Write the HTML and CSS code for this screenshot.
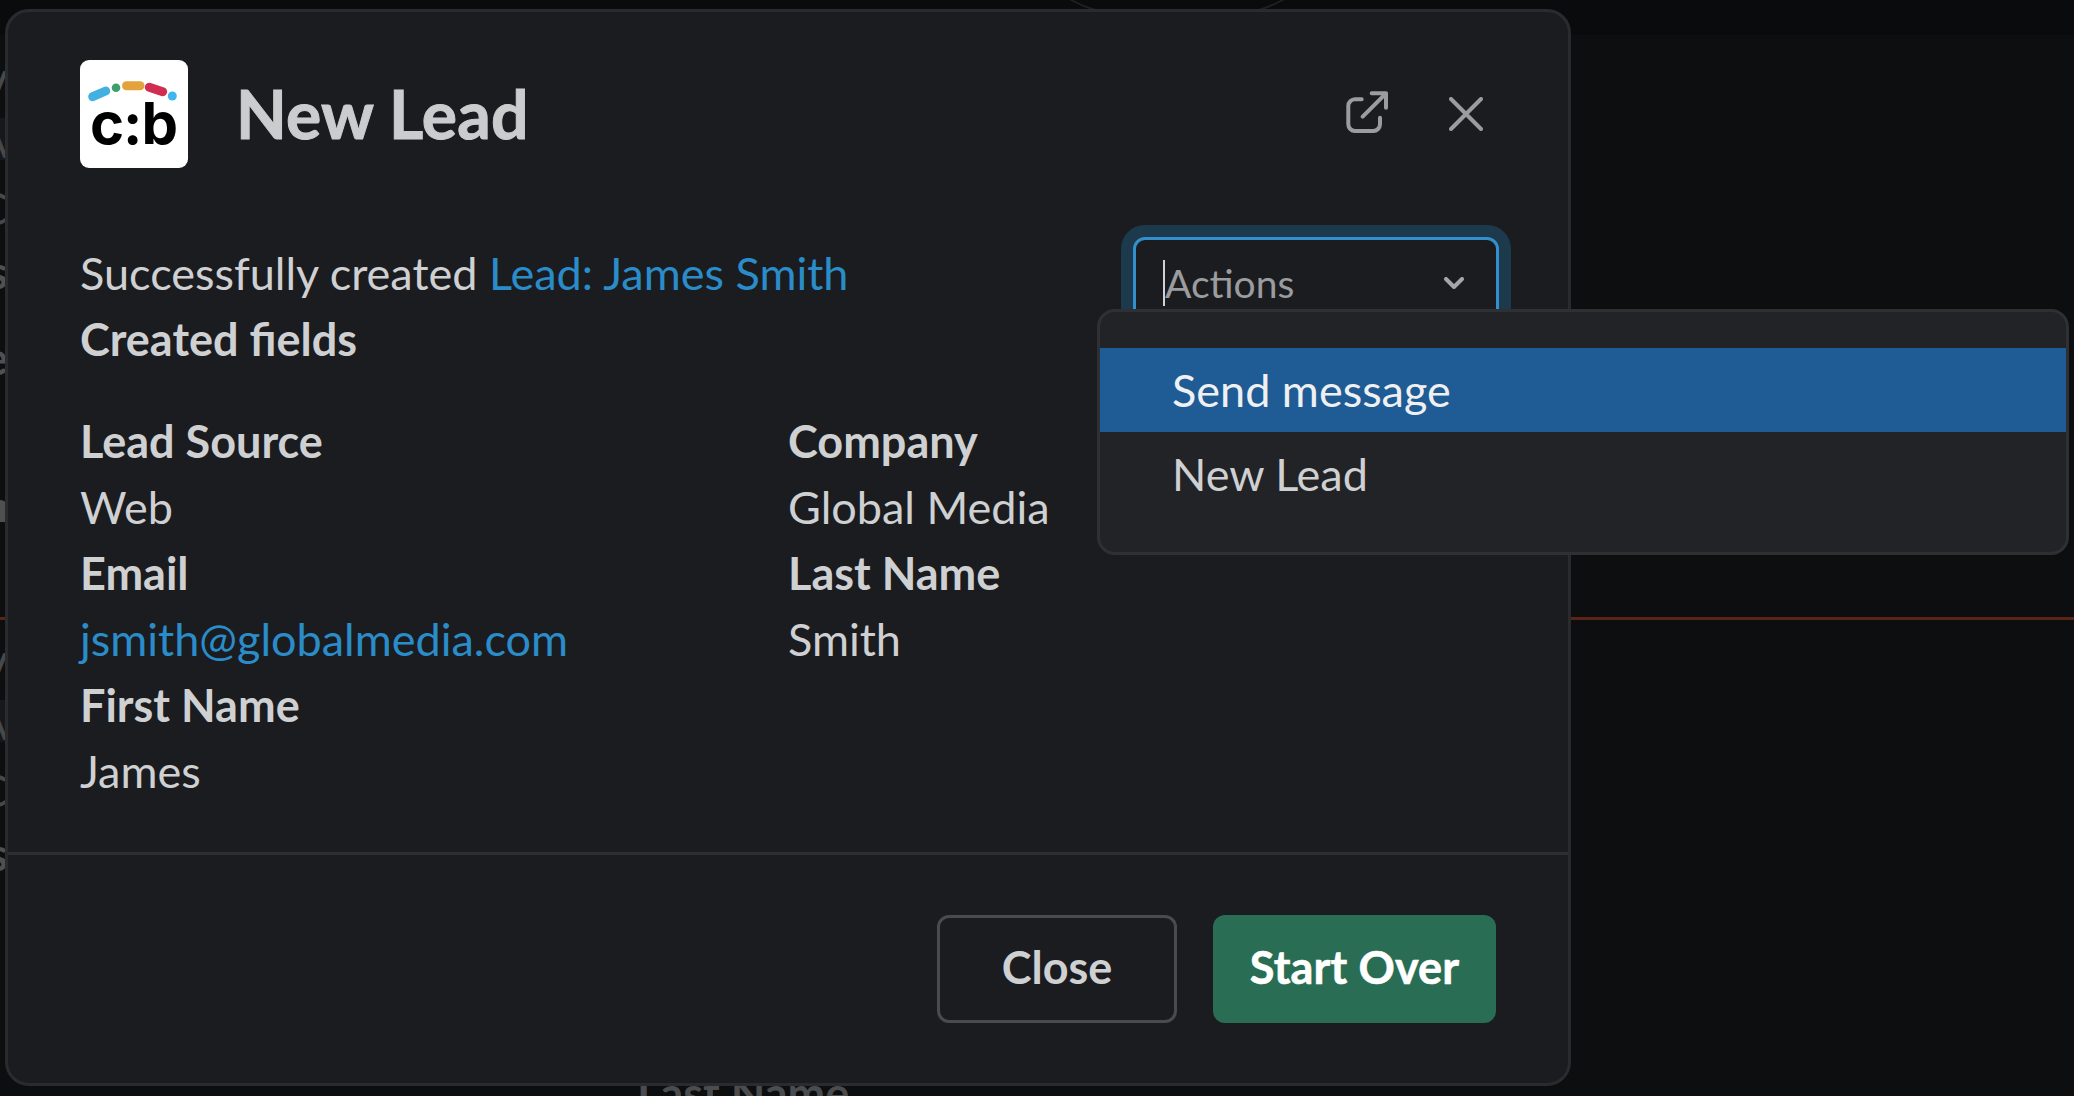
FILE: index.html
```html
<!DOCTYPE html>
<html lang="en">
<head>
<meta charset="utf-8">
<title>New Lead</title>
<link rel="stylesheet" href="styles.css">
</head>
<body>
<div class="backdrop">
  <div class="topbar"><span class="arc"></span></div>
  <div class="peek m29">V</div>
  <div class="peek band m9">A</div>
  <div class="peek m26">C</div>
  <div class="peek strong m19">s</div>
  <div class="peek strong m41">e</div>
  <div class="blob"></div>
  <div class="redline"></div>
  <div class="peek m26">V</div>
  <div class="peek band m9">A</div>
  <div class="peek m26">C</div>
  <div class="peek strong m19">s</div>
  <div class="ghost-label">Last Name</div>
</div>

<section class="modal">
  <header class="modal-head">
    <svg class="logo" viewBox="0 0 108 108" aria-label="c:b logo">
      <rect width="108" height="108" rx="9" fill="#fff"/>
      <path d="M12.7 36.7 25.7 31" stroke="#42b0e0" stroke-width="9" stroke-linecap="round"/>
      <circle cx="36" cy="27.7" r="4.3" fill="#3f9e6c"/>
      <path d="M46.500 25.700H60" stroke="#e2a33c" stroke-width="9" stroke-linecap="round"/>
      <path d="M69.300 27.300 82.700 31.700" stroke="#d12d50" stroke-width="9" stroke-linecap="round"/>
      <circle cx="92.300" cy="36" r="4.500" fill="#41b6ee"/>
      <text x="10" y="84" textLength="88" lengthAdjust="spacing" class="logo-text">c:b</text>
    </svg>
    <h1 class="title">New Lead</h1>
    <div class="head-icons">
      <svg class="icon-ext" viewBox="0 0 42 42" fill="none"><path d="M15.700 8.300H9a6.700 6.700 0 0 0-6.700 6.700V33.300a6.700 6.700 0 0 0 6.700 6.700H27.300a6.700 6.700 0 0 0 6.700-6.700V26.700M16.700 25.700 40 2.300M25.700 2.300H40V16.700"/></svg>
      <svg class="icon-x" viewBox="0 0 34 34" fill="none"><path d="M2 2 32 32M32 2 2 32"/></svg>
    </div>
  </header>

  <div class="modal-body">
    <div class="summary">
      <div class="status">
        <p>Successfully created <a class="link">Lead: James Smith</a></p>
        <p class="b">Created fields</p>
      </div>
      <div class="select">
        <span class="caret">Actions</span>
        <svg class="chev" viewBox="0 0 20 12" fill="none"><path d="M2 2 10 10 18 2"/></svg>
      </div>
    </div>
    <div class="fields">
      <dl class="field-col">
        <dt>Lead Source</dt><dd>Web</dd>
        <dt>Email</dt><dd><a class="link">jsmith@globalmedia.com</a></dd>
        <dt>First Name</dt><dd>James</dd>
      </dl>
      <dl class="field-col">
        <dt>Company</dt><dd>Global Media</dd>
        <dt>Last Name</dt><dd>Smith</dd>
      </dl>
    </div>
  </div>

  <footer class="modal-foot">
    <button class="btn btn-ghost">Close</button>
    <button class="btn btn-go">Start Over</button>
  </footer>

  <ul class="menu">
    <li class="menu-item active">Send message</li>
    <li class="menu-item">New Lead</li>
  </ul>
</section>
</body>
</html>
```
FILE: styles.css
```css
* { box-sizing: border-box; }
html, body { margin: 0; height: 1096px; overflow: hidden; }
body {
  position: relative;
  background: #0d0e10;
  font-family: "Lato", "Liberation Sans", sans-serif;
  font-size: 45px;
  line-height: 66px;
  color: #cfd0d2;
}

/* dimmed page behind the modal */
.backdrop { display: flex; flex-direction: column; height: 1096px; }
.topbar { flex: none; position: relative; height: 35px; background: #0a0b0d; overflow: hidden; }
.arc {
  position: absolute; left: 1050px; top: -72px; width: 254px; height: 94px;
  border: 2px solid #1f2123; border-radius: 50%;
}
.peek {
  flex: none; display: flex; justify-content: flex-end; width: 8px;
  height: 45px; line-height: 45px; color: #47484a; white-space: nowrap;
}
.peek.band { height: 42px; line-height: 46px; background: #17181b; }
.peek.strong { font-weight: 700; color: #4f5052; }
.m29 { margin-top: 29px; }
.m9 { margin-top: 9px; }
.m26 { margin-top: 26px; }
.m19 { margin-top: 19px; }
.m41 { margin-top: 41px; }
.blob { flex: none; width: 8px; height: 22px; margin-top: 119px; background: #4f5052; border-top-right-radius: 12px; }
.redline { flex: none; height: 3px; margin-top: 95px; background: #5a2416; }
.ghost-label {
  flex: none; margin-top: 194px; padding-left: 637px; height: 45px; line-height: 45px;
  font-weight: 700; color: #4b4c4e;
}

/* modal */
.modal {
  position: absolute; left: 5px; top: 9px; width: 1566px; height: 1077px;
  display: flex; flex-direction: column;
  background: #1b1c20; border: 3px solid #2a2b2e; border-radius: 24px;
}
.modal-head { display: flex; align-items: center; padding: 48px 72px 0; }
.logo { width: 108px; height: 108px; flex: none; fill: none; }
.logo-text { font-family: "Inter", "Liberation Sans", sans-serif; font-weight: 700; font-size: 58px; fill: #000; }
.title {
  margin: 0 0 0 48px; font-size: 66px; line-height: 84px; font-weight: 700;
  letter-spacing: .2px; -webkit-text-stroke: 1px #cbccce; color: #cbccce;
}
.head-icons { margin-left: auto; display: flex; align-items: center; gap: 61px; padding-right: 13px; }
.icon-ext { width: 42px; height: 42px; margin-top: -4px; }
.icon-x { width: 34px; height: 34px; }
.head-icons path { stroke: #9b9c9e; stroke-width: 4; stroke-linecap: round; stroke-linejoin: round; }

.modal-body { flex: 1; padding: 72px 72px 0; }
.summary { display: flex; justify-content: space-between; align-items: flex-start; }
.status p { margin: 0; }
.b { font-weight: 700; }
.link { color: #2a8cc8; }
.select {
  display: flex; align-items: center; justify-content: space-between;
  width: 366px; height: 108px; margin: -3px -3px 0 0; padding: 0 32px 16px 27px;
  border: 3px solid #3390cc; border-radius: 12px; background: #1b1c20;
  box-shadow: 0 0 0 12px #1d3a4d; color: #9b9c9e;
}
.caret {
  border-left: 2px solid #d1d2d3; line-height: 46px;
  font-size: 39px; font-variant-ligatures: common-ligatures;
}
.chev { width: 20px; height: 12px; }
.chev path { stroke: #a5a6a8; stroke-width: 4; stroke-linecap: round; stroke-linejoin: round; }

.fields { display: grid; grid-template-columns: 708px 1fr; margin-top: 36px; }
.field-col { margin: 0; }
.field-col dt { font-weight: 700; }
.field-col dd { margin: 0; }

.modal-foot {
  display: flex; justify-content: flex-end; gap: 36px;
  height: 231px; padding: 60px 72px 0;
  border-top: 3px solid #2c2e31;
}
.btn {
  height: 108px; padding: 0 0 3px; font: inherit; font-weight: 700; line-height: 1; border-radius: 12px; cursor: pointer;
}
.btn-ghost { width: 240px; background: transparent; border: 3px solid #4a4b4e; color: #cfd0d2; }
.btn-go { width: 283px; background: #296d54; border: 0; color: #fff; letter-spacing: .15px; -webkit-text-stroke: .6px #fff; }

/* dropdown lying over the modal */
.menu {
  position: absolute; left: 1089px; top: 297px; width: 972px; height: 246px;
  margin: 0; padding: 36px 0 0; list-style: none;
  background: #222326; border: 3px solid #2e3034; border-radius: 18px;
}
.menu-item { height: 84px; line-height: 84px; padding-left: 72px; color: #cfd0d2; }
.menu-item.active { background: #1f5b94; color: #eef0f2; }
```
